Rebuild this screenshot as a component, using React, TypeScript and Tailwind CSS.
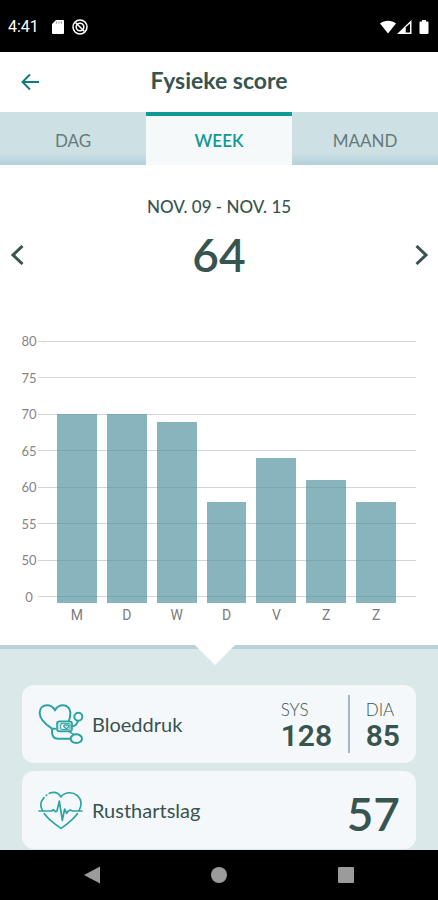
import { useState } from "react";

const TABS = ["DAG", "WEEK", "MAAND"] as const;

const TICKS = [80, 75, 70, 65, 60, 55, 50, 0];

const DAYS = [
  { id: "mon", label: "M", score: 70 },
  { id: "tue", label: "D", score: 70 },
  { id: "wed", label: "W", score: 69 },
  { id: "thu", label: "D", score: 58 },
  { id: "fri", label: "V", score: 64 },
  { id: "sat", label: "Z", score: 61 },
  { id: "sun", label: "Z", score: 58 },
];

// the axis is cut off just below 45, bars run down to that line
const AXIS_MIN = 44.3;
const AXIS_MAX = 80;

function StatusBar() {
  return (
    <div className="flex h-13 items-center justify-between bg-black px-2 pt-0.5 text-white">
      <div className="flex items-center gap-3">
        <span className="w-8 font-[Roboto] text-base">4:41</span>
        <svg className="h-4 w-3" viewBox="0 0 12 16" fill="currentColor" aria-hidden="true">
          <path d="M4 1h7a1 1 0 0 1 1 1v12a1 1 0 0 1-1 1H1a1 1 0 0 1-1-1V5z" />
          <path d="M4.5 2.5v2M7 2.500v2M9.500 2.500v2" stroke="#777" strokeWidth="0.8" />
        </svg>
        <svg className="-ml-1 size-4" viewBox="0 0 16 16" fill="none" stroke="currentColor" aria-hidden="true">
          <circle cx="8" cy="8" r="7" strokeWidth="1.500" />
          <circle cx="8" cy="8" r="3.800" strokeWidth="1.600" />
          <path d="M3.500 3.500l9 9" strokeWidth="1.500" />
        </svg>
      </div>
      <div className="flex items-center gap-px">
        <svg className="h-4 w-4" viewBox="0 0 16 16" fill="currentColor" aria-hidden="true">
          <path d="M8 14.500L0 4.500C4.500 .7 11.500 .7 16 4.500z" />
        </svg>
        <svg className="h-4 w-4" viewBox="0 0 16 16" fill="currentColor" aria-hidden="true">
          <path fillRule="evenodd" d="M0 15L14.500 1v14zM8.500 8.500v5h4.500V4.500z" />
          <path d="M8.500 8.500v5h-5z" />
        </svg>
        <svg className="ml-1 h-4 w-3" viewBox="0 0 12 16" fill="currentColor" aria-hidden="true">
          <path d="M4 1h4v1.500h1.500a1 1 0 0 1 1 1V14a1 1 0 0 1-1 1h-7a1 1 0 0 1-1-1V3.500a1 1 0 0 1 1-1H4z" />
        </svg>
      </div>
    </div>
  );
}

function ScoreChart() {
  return (
    <div className="mt-13 px-5.5">
      <div className="relative h-[268px]">
        <div className="-ml-0.5 flex h-full flex-col justify-between">
          {TICKS.map((tick) => (
            <div key={tick} className="flex h-3 items-center">
              <span className="w-[18px] text-center text-[13px] leading-3 text-[#858585]">{tick}</span>
              <span className="h-px flex-1 bg-[#d2d4d6]" />
            </div>
          ))}
        </div>
        <div className="absolute top-1.5 right-5 bottom-0 left-[35px] flex items-end gap-2.5">
          {DAYS.map((day) => (
            <div
              key={day.id}
              className="flex-1 bg-[#4f909f]/68"
              style={{ height: `${((day.score - AXIS_MIN) / (AXIS_MAX - AXIS_MIN)) * 100}%` }}
            />
          ))}
        </div>
      </div>
      <div className="mt-0.5 flex gap-2.5 pr-5 pl-[35px] font-[Roboto] text-sm text-[#7c7c7c]">
        {DAYS.map((day) => (
          <span key={day.id} className="flex-1 text-center">
            {day.label}
          </span>
        ))}
      </div>
    </div>
  );
}

function BloodPressureIcon() {
  return (
    <svg
      className="h-[42px] w-[46px]"
      viewBox="20 25 138 126"
      fill="none"
      stroke="#2ba3a0"
      strokeWidth="6"
      strokeLinecap="round"
      strokeLinejoin="round"
      aria-hidden="true"
    >
      <path d="M72 102H62C44 90 25 72 25 55C25 40 35 32 47 32C58 32 66 38 71 47C76 38 84 32 95 32C108 32 117 42 117 54C117 62 116 70 113 77" />
      <rect x="77" y="80" width="45" height="30" rx="7" fill="#2ba3a0" fillOpacity="0.25" strokeWidth="5" />
      <rect x="88" y="87" width="28" height="17" rx="3" fill="#f5f8fa" strokeWidth="3" />
      <path d="M105 102l-7-6c-2-5 4-7 7-3c3-4 9-2 7 3z" strokeWidth="4" />
      <circle cx="141" cy="66" r="12" />
      <path d="M139 79C138 90 132 94 123 95" />
      <path d="M62 103V112C62 126 68 132 80 132H117" />
      <ellipse cx="135" cy="132" rx="17" ry="13" />
      <path d="M112 110l15 9" strokeWidth="4" />
    </svg>
  );
}

function HeartRateIcon() {
  return (
    <svg
      className="h-[42px] w-[46px]"
      viewBox="111 90 138 126"
      fill="none"
      stroke="#2ba3a0"
      strokeWidth="5"
      strokeLinecap="round"
      strokeLinejoin="round"
      aria-hidden="true"
    >
      <path d="M145 103C160 97 173 102 180 114C190 99 214 97 228 109C243 122 243 138 234 155" />
      <path d="M129 116C117 129 118 144 125 155" />
      <path d="M136 109l1-1" />
      <path d="M130 164C143 182 164 197 180 208C196 197 216 182 229 164" />
      <path d="M114 156H152L157 152L163 158L168 156L175 126L184 184L191 150L197 163L202 156L208 153L214 156H243" />
    </svg>
  );
}

export default function App() {
  const [tab, setTab] = useState<(typeof TABS)[number]>("WEEK");

  return (
    <div className="flex min-h-screen flex-col bg-white font-[Lato,sans-serif] text-[#38544f]">
      <StatusBar />

      <header className="grid h-15 grid-cols-[60px_1fr_60px] items-center">
        <button type="button" aria-label="Terug" className="flex justify-center text-[#127a87]">
          <svg className="size-5" viewBox="0 0 20 20" fill="none" stroke="currentColor" strokeWidth="2" aria-hidden="true">
            <path d="M19 10H3M10 2.500L2.500 10L10 17.500" />
          </svg>
        </button>
        <h1 className="pb-1 text-center text-[23px] leading-7 font-bold">Fysieke score</h1>
      </header>

      <div role="tablist" className="grid grid-cols-3">
        {TABS.map((name) => (
          <button
            key={name}
            type="button"
            role="tab"
            aria-selected={tab === name}
            onClick={() => setTab(name)}
            className={`h-[53px] border-t-4 text-[17px] ${
              tab === name
                ? "border-[#109a96] bg-[#f6f9f9] font-semibold text-[#109a96]"
                : "border-[#cde1e4] bg-linear-to-b from-[#cde1e4] from-75% to-[#b3d0da] text-[#66797b]"
            }`}
          >
            {name}
          </button>
        ))}
      </div>

      <main className="flex flex-1 flex-col">
        <section className="pt-7.5 pb-5">
          <p className="text-center text-[17px] leading-6 font-medium">NOV. 09 - NOV. 15</p>
          <div className="mt-2 flex items-center justify-between px-2">
            <button type="button" aria-label="Vorige week">
              <svg className="size-5" viewBox="0 0 20 20" fill="none" stroke="currentColor" strokeWidth="3" aria-hidden="true">
                <path d="M14.500 1L5 10L14.500 19" />
              </svg>
            </button>
            <p className="text-[46px] leading-[56px] font-semibold">64</p>
            <button type="button" aria-label="Volgende week">
              <svg className="size-5" viewBox="0 0 20 20" fill="none" stroke="currentColor" strokeWidth="3" aria-hidden="true">
                <path d="M6.500 1L16 10L6.500 19" />
              </svg>
            </button>
          </div>
          <ScoreChart />
        </section>

        <section className="relative flex-1 border-t-4 border-[#b9d1d8] bg-[#dae8e9] px-5.5 pt-9">
          <svg className="absolute -top-1 left-1/2 h-5 w-10 -translate-x-6" viewBox="0 0 40 20" aria-hidden="true">
            <path d="M0 0H40L20 20z" fill="#fff" />
          </svg>
          <div className="flex flex-col gap-2">
            <article className="flex h-[78px] items-center rounded-xl bg-[#f5f8fa] px-4">
              <BloodPressureIcon />
              <h2 className="ml-2 flex-1 text-xl">Bloeddruk</h2>
              <div className="w-[67px]">
                <p className="text-[17px] leading-6 font-light">SYS</p>
                <p className="font-[Roboto] text-3xl leading-7 font-semibold">128</p>
              </div>
              <div className="h-[58px] w-[2px] bg-[#a5b7c1]" />
              <div className="ml-4">
                <p className="text-[17px] leading-6 font-light">DIA</p>
                <p className="font-[Roboto] text-3xl leading-7 font-semibold">85</p>
              </div>
            </article>
            <article className="flex h-[78px] items-center rounded-xl bg-[#f5f8fa] px-4">
              <HeartRateIcon />
              <h2 className="ml-2 flex-1 text-xl">Rusthartslag</h2>
              <p className="pt-2 text-[46px] leading-[56px] font-semibold">57</p>
            </article>
          </div>
        </section>
      </main>

      <nav className="flex h-[50px] items-center justify-around bg-black px-7 text-[#9b9b9b]">
        <button type="button" aria-label="Vorige">
          <svg className="size-5" viewBox="0 0 20 20" fill="currentColor" aria-hidden="true">
            <path d="M18 1.500v17L2 10z" />
          </svg>
        </button>
        <button type="button" aria-label="Startscherm">
          <svg className="size-5" viewBox="0 0 20 20" fill="currentColor" aria-hidden="true">
            <circle cx="10" cy="10" r="8" />
          </svg>
        </button>
        <button type="button" aria-label="Recente apps">
          <svg className="size-5" viewBox="0 0 20 20" fill="currentColor" aria-hidden="true">
            <rect x="2" y="2" width="16" height="16" rx="1" />
          </svg>
        </button>
      </nav>
    </div>
  );
}
